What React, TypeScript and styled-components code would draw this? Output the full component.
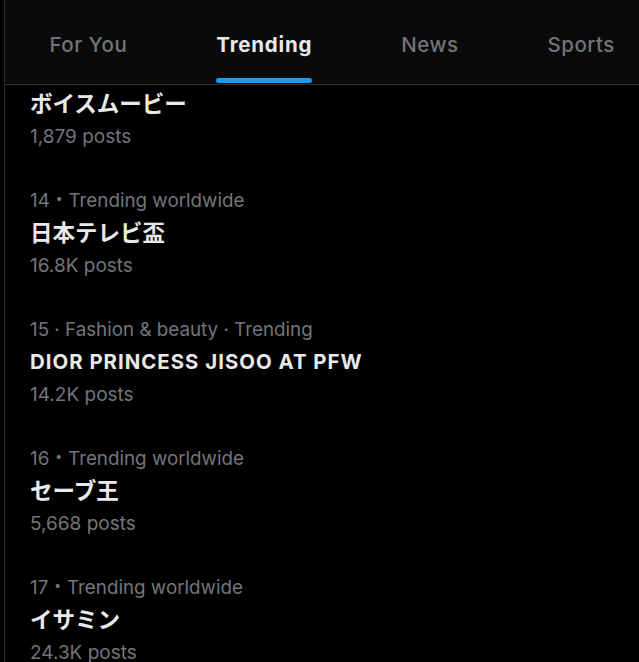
import React from 'react';
import styled, { createGlobalStyle } from 'styled-components';

const GlobalStyle = createGlobalStyle`
    html, body {
        margin: 0;
        padding: 0;
        background: #000;
    }
    body {
        font-family: "Inter", "Noto Sans CJK JP", sans-serif;
        -webkit-font-smoothing: antialiased;
    }
`

const tabs = ['For You', 'Trending', 'News', 'Sports'];

// cjk: 日本語のタイトルは少し大きく表示される
const trends = [
    { meta: '13・Trending worldwide', title: 'ボイスムービー', posts: '1,879 posts', cjk: true },
    { meta: '14・Trending worldwide', title: '日本テレビ盃', posts: '16.8K posts', cjk: true },
    { meta: '15 · Fashion & beauty · Trending', title: 'DIOR PRINCESS JISOO AT PFW', posts: '14.2K posts', cjk: false },
    { meta: '16・Trending worldwide', title: 'セーブ王', posts: '5,668 posts', cjk: true },
    { meta: '17・Trending worldwide', title: 'イサミン', posts: '24.3K posts', cjk: true },
];

const App = () => {
    const active = 'Trending';

    return (
        <>
            <GlobalStyle />
            <StPage>
                <StColumn>
                    <StHeader>
                        {tabs.map((tab) => (
                            <StTab key={tab}>
                                <StTabLabel active={tab === active}>
                                    {tab}
                                    {tab === active && <StIndicator />}
                                </StTabLabel>
                            </StTab>
                        ))}
                    </StHeader>
                    <StFeed>
                        <StFeedInner>
                            {trends.map((trend) => (
                                <StTrend key={trend.title}>
                                    <StMeta>{trend.meta}</StMeta>
                                    <StTitle cjk={trend.cjk}>{trend.title}</StTitle>
                                    <StPosts>{trend.posts}</StPosts>
                                </StTrend>
                            ))}
                        </StFeedInner>
                    </StFeed>
                </StColumn>
            </StPage>
        </>
    );
};

const StPage = styled.div`
    width: 639px;
    height: 662px;
    padding-left: 4px;
    box-sizing: border-box;
    overflow: hidden;
    background: #000;
`

const StColumn = styled.div`
    display: flex;
    flex-direction: column;
    height: 100%;
    border-left: 1px solid #2f3336;
`

const StHeader = styled.div`
    display: flex;
    flex-shrink: 0;
    height: 84px;
    background: #0a0a0a;
    border-bottom: 1px solid #2f3336;
    white-space: nowrap;
`

const StTab = styled.div`
    display: flex;
    align-items: stretch;
    padding: 4px 44.5px 0;
`

const StTabLabel = styled.div<{ active: boolean }>`
    position: relative;
    display: flex;
    align-items: center;
    font-size: 20.5px;
    letter-spacing: ${props => (props.active ? '0.8px' : '0.5px')};
    font-weight: ${props => (props.active ? 700 : 500)};
    color: ${props => (props.active ? '#e7e9ea' : '#71767b')};
`

const StIndicator = styled.div`
    position: absolute;
    left: 0;
    right: 0;
    bottom: 1px;
    height: 5px;
    border-radius: 999px;
    background: #1d9bf0;
`

const StFeed = styled.div`
    flex: 1;
    overflow: hidden;
`

const StFeedInner = styled.div`
    margin-top: -45px;
`

const StTrend = styled.div`
    display: flex;
    flex-direction: column;
    padding: 16px 0 16px 25px;
`

const StMeta = styled.div`
    font-size: 18.8px;
    line-height: 32px;
    color: #71767b;
`

const StTitle = styled.div<{ cjk: boolean }>`
    font-size: ${props => (props.cjk ? '22.5px' : '20.4px')};
    letter-spacing: ${props => (props.cjk ? '0' : '1px')};
    line-height: 32px;
    font-weight: 700;
    color: #e7e9ea;
`

const StPosts = styled.div`
    margin-top: 1px;
    font-size: 19px;
    line-height: 32px;
    color: #71767b;
`

export default App;
